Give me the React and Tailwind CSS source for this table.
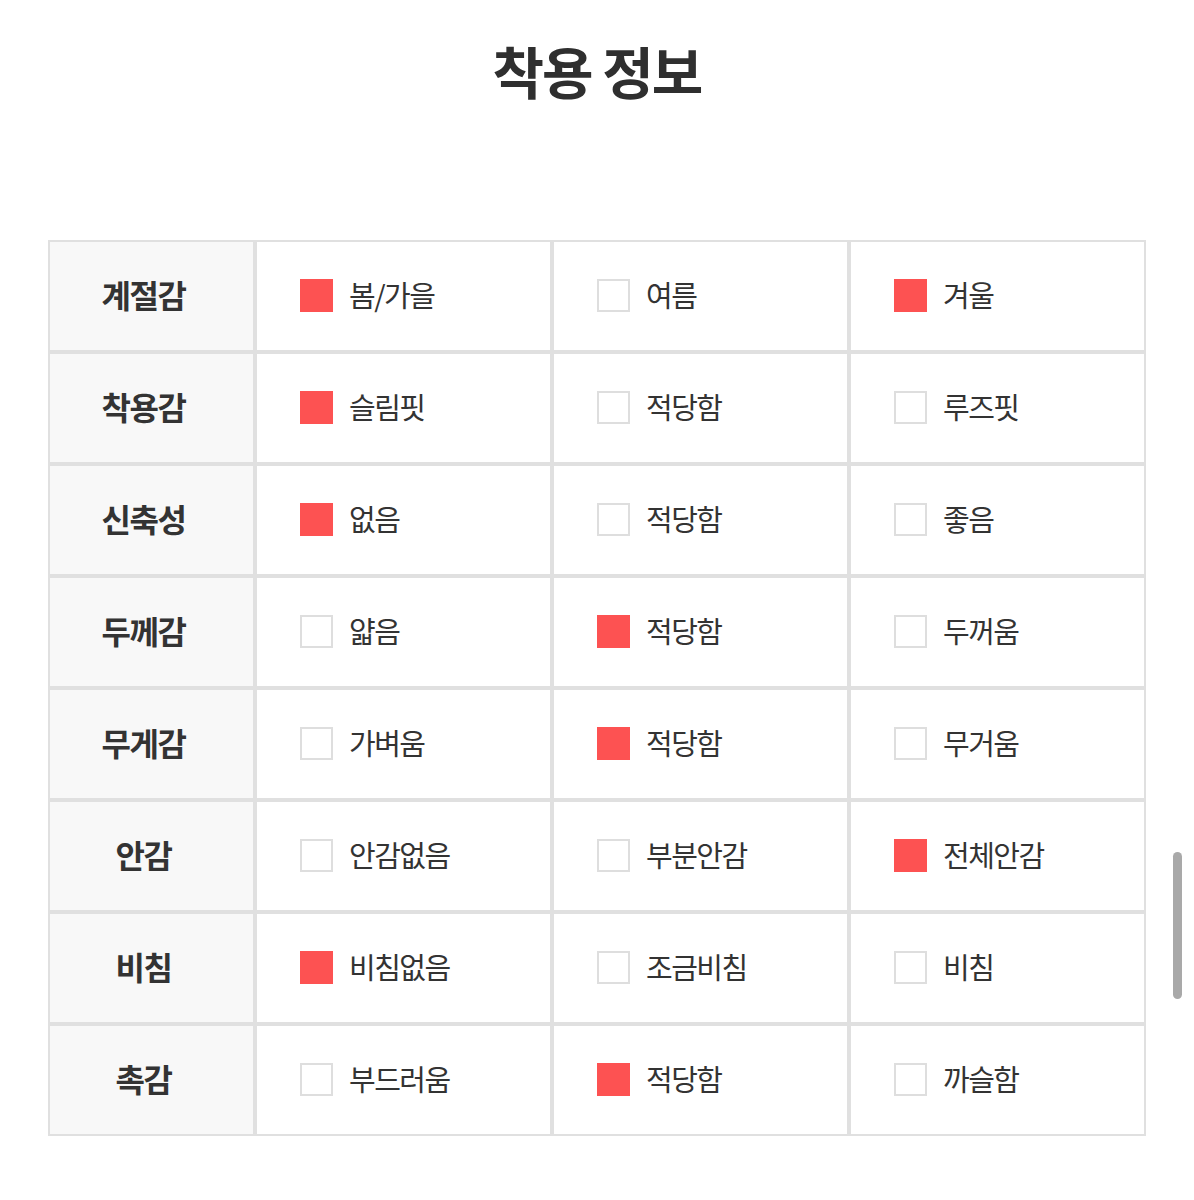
import React from "react";

const rows = [
  ["계절감", ["봄/가을", true], ["여름", false], ["겨울", true]],
  ["착용감", ["슬림핏", true], ["적당함", false], ["루즈핏", false]],
  ["신축성", ["없음", true], ["적당함", false], ["좋음", false]],
  ["두께감", ["얇음", false], ["적당함", true], ["두꺼움", false]],
  ["무게감", ["가벼움", false], ["적당함", true], ["무거움", false]],
  ["안감", ["안감없음", false], ["부분안감", false], ["전체안감", true]],
  ["비침", ["비침없음", true], ["조금비침", false], ["비침", false]],
  ["촉감", ["부드러움", false], ["적당함", true], ["까슬함", false]],
];

const font = { fontFamily: '"Noto Sans CJK KR", "Noto Sans", sans-serif' };

function Cell({ label, on }) {
  return (
    <td className="border-2 border-[#e0e0e0] bg-white h-[112px] p-0 align-middle">
      <div className="flex items-center pl-[43px] pb-[2px]">
        {on ? (
          <span className="block w-[33px] h-[33px] bg-[#fd5252]" />
        ) : (
          <span className="block w-[33px] h-[33px] border-2 border-[#dedede] bg-white" />
        )}
        <span className="ml-[16px] text-[29px] leading-none tracking-[-1.5px] text-[#333] -mt-[2px]">{label}</span>
      </div>
    </td>
  );
}

export default function App() {
  return (
    <div className="relative w-[1194px] h-[1200px] bg-white overflow-hidden" style={font}>
      <h1 className="pt-[38px] text-center text-[56px] font-bold leading-[64px] tracking-[-2px] text-[#2f2f2f]">
        착용 정보
      </h1>
      <div className="pt-[138px] pl-[48px]">
        <table className="border-separate border-spacing-0 w-[1098px] table-fixed">
          <colgroup>
            <col className="w-[207px]" />
            <col className="w-[297px]" />
            <col className="w-[297px]" />
            <col className="w-[297px]" />
          </colgroup>
          <tbody>
            {rows.map((r) => (
              <tr key={r[0]}>
                <td className="border-2 border-[#e0e0e0] bg-[#f8f8f8] h-[112px] p-0 pr-[16px] pb-[4px] text-center align-middle text-[32px] font-bold tracking-[-1.5px] text-[#333] leading-none">
                  {r[0]}
                </td>
                <Cell label={r[1][0]} on={r[1][1]} />
                <Cell label={r[2][0]} on={r[2][1]} />
                <Cell label={r[3][0]} on={r[3][1]} />
              </tr>
            ))}
          </tbody>
        </table>
      </div>
      <div className="absolute left-[1173px] top-[852px] w-[9px] h-[147px] rounded-full bg-[#a9a9a9]" />
    </div>
  );
}
